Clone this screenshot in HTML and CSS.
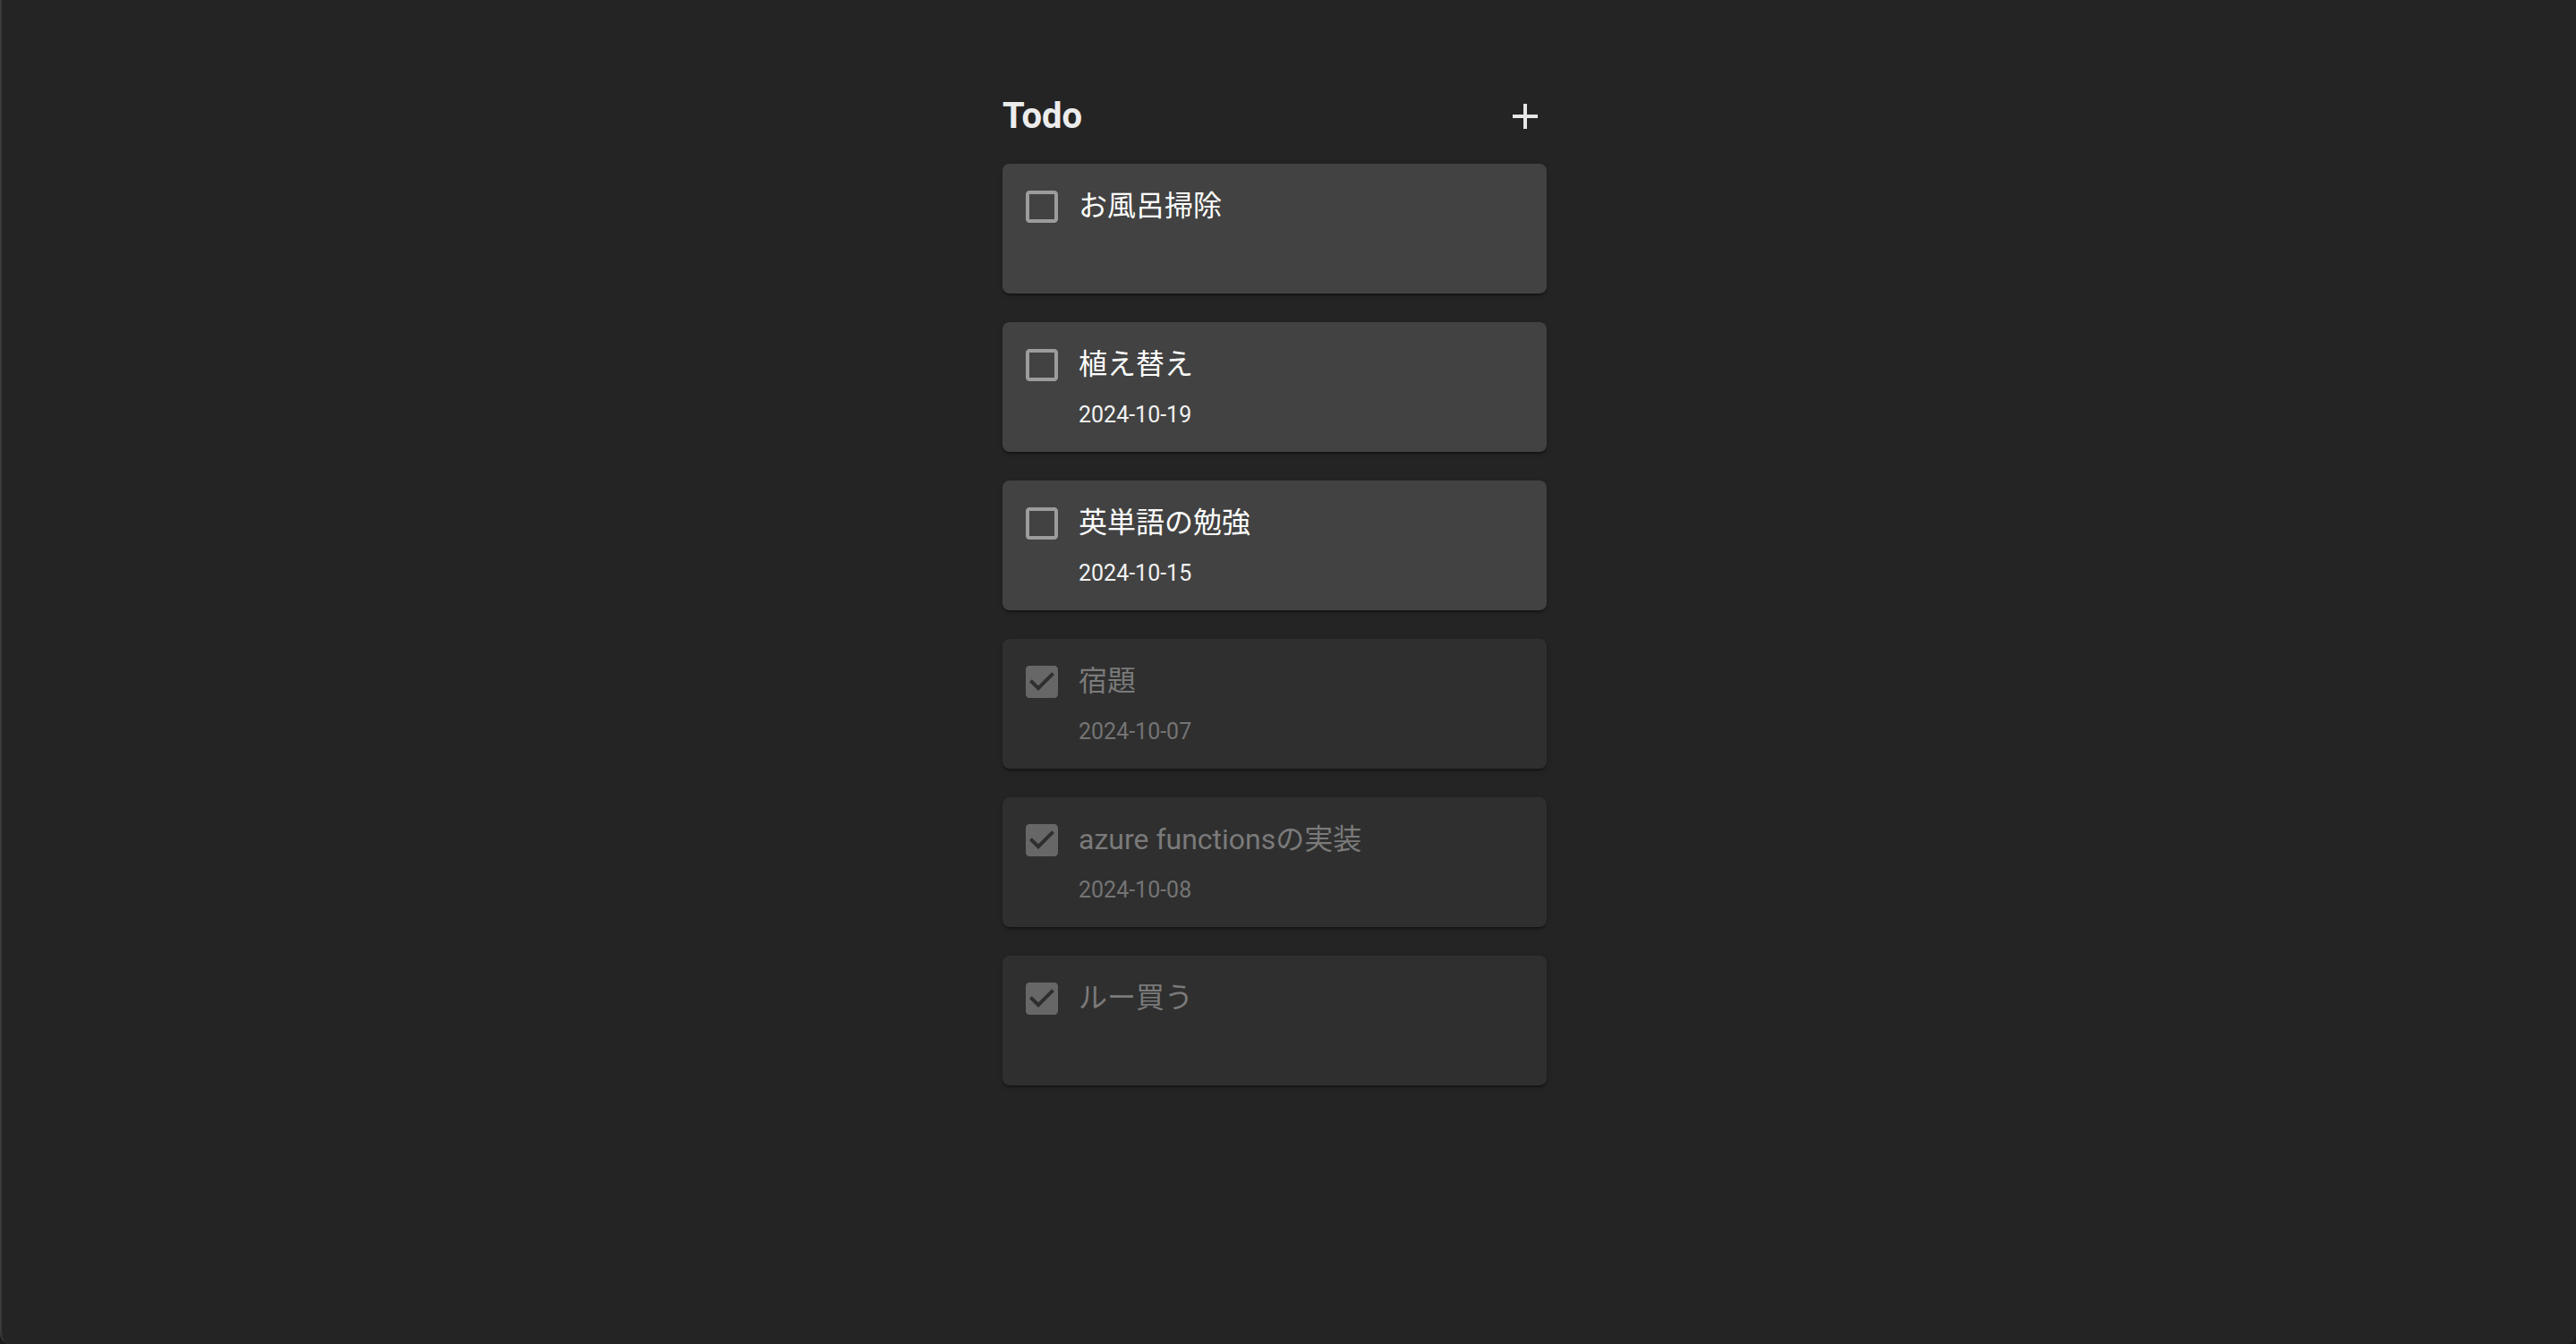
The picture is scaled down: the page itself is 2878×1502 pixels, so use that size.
FILE: index.html
```html
<!DOCTYPE html>
<html lang="ja">
<head>
<meta charset="utf-8">
<title>Todo</title>
<link rel="stylesheet" href="styles.css">
</head>
<body>
<div class="frame">
  <main class="todo">
    <header class="todo-header">
      <h1 class="todo-title">Todo</h1>
      <button class="add-btn" aria-label="追加">
        <svg viewBox="0 0 24 24" width="48" height="48"><path d="M19 13h-6v6h-2v-6H5v-2h6V5h2v6h6v2z"/></svg>
      </button>
    </header>
    <ul class="todo-list">
      <li class="card">
        <svg class="box" viewBox="0 0 24 24" width="48" height="48"><path d="M19 5v14H5V5h14m0-2H5c-1.1 0-2 .9-2 2v14c0 1.1.9 2 2 2h14c1.1 0 2-.9 2-2V5c0-1.1-.9-2-2-2z"/></svg>
        <div class="body"><div class="title">お風呂掃除</div><div class="date"></div></div>
      </li>
      <li class="card">
        <svg class="box" viewBox="0 0 24 24" width="48" height="48"><path d="M19 5v14H5V5h14m0-2H5c-1.1 0-2 .9-2 2v14c0 1.1.9 2 2 2h14c1.1 0 2-.9 2-2V5c0-1.1-.9-2-2-2z"/></svg>
        <div class="body"><div class="title">植え替え</div><div class="date">2024-10-19</div></div>
      </li>
      <li class="card">
        <svg class="box" viewBox="0 0 24 24" width="48" height="48"><path d="M19 5v14H5V5h14m0-2H5c-1.1 0-2 .9-2 2v14c0 1.1.9 2 2 2h14c1.1 0 2-.9 2-2V5c0-1.1-.9-2-2-2z"/></svg>
        <div class="body"><div class="title">英単語の勉強</div><div class="date">2024-10-15</div></div>
      </li>
      <li class="card done">
        <svg class="box" viewBox="0 0 24 24" width="48" height="48"><path d="M19 3H5c-1.11 0-2 .9-2 2v14c0 1.1.89 2 2 2h14c1.11 0 2-.9 2-2V5c0-1.1-.89-2-2-2zm-9 14l-5-5 1.41-1.41L10 14.17l7.59-7.59L19 8l-9 9z"/></svg>
        <div class="body"><div class="title">宿題</div><div class="date">2024-10-07</div></div>
      </li>
      <li class="card done">
        <svg class="box" viewBox="0 0 24 24" width="48" height="48"><path d="M19 3H5c-1.11 0-2 .9-2 2v14c0 1.1.89 2 2 2h14c1.11 0 2-.9 2-2V5c0-1.1-.89-2-2-2zm-9 14l-5-5 1.41-1.41L10 14.17l7.59-7.59L19 8l-9 9z"/></svg>
        <div class="body"><div class="title">azure functionsの実装</div><div class="date">2024-10-08</div></div>
      </li>
      <li class="card done">
        <svg class="box" viewBox="0 0 24 24" width="48" height="48"><path d="M19 3H5c-1.11 0-2 .9-2 2v14c0 1.1.89 2 2 2h14c1.11 0 2-.9 2-2V5c0-1.1-.89-2-2-2zm-9 14l-5-5 1.41-1.41L10 14.17l7.59-7.59L19 8l-9 9z"/></svg>
        <div class="body"><div class="title">ルー買う</div><div class="date"></div></div>
      </li>
    </ul>
  </main>
</div>
</body>
</html>
```
FILE: styles.css
```css
html {
  background: #1c1c1c;
}
body {
  margin: 0;
  font-family: "Roboto", "Noto Sans CJK JP", sans-serif;
  color: #fff;
}
.frame {
  box-sizing: border-box;
  height: 1502px;
  background: #242424;
  border-left: 2px solid #3a3a3a;
  border-radius: 0 0 12px 12px;
  display: flex;
  justify-content: center;
  padding-right: 32px;
}
.todo {
  width: 608px;
  padding-top: 98px;
}
.todo-header {
  display: flex;
  align-items: center;
  justify-content: space-between;
  height: 64px;
}
.todo-title {
  margin: 0;
  font-size: 40px;
  font-weight: 700;
  line-height: 64px;
  color: #ececec;
}
.add-btn {
  border: 0;
  padding: 0;
  background: none;
  width: 48px;
  height: 48px;
  display: flex;
}
.add-btn svg {
  fill: #e6e6e6;
}
.todo-list {
  list-style: none;
  margin: 21px 0 0;
  padding: 0;
  display: flex;
  flex-direction: column;
  gap: 32px;
}
.card {
  box-sizing: border-box;
  height: 145px;
  background: #424242;
  border-radius: 8px;
  box-shadow: 0 4px 2px -2px rgba(0,0,0,.2), 0 2px 2px 0 rgba(0,0,0,.14), 0 2px 6px 0 rgba(0,0,0,.12);
  display: flex;
  align-items: flex-start;
  padding: 23px 24px 24px 20px;
  gap: 17px;
}
.box {
  flex: none;
  margin-top: 1px;
  fill: #9c9c9c;
}
.title {
  font-size: 32px;
  line-height: 48px;
  color: #fff;
}
.date {
  margin-top: 16px;
  font-size: 25px;
  line-height: 34px;
  min-height: 34px;
  color: #f2f2f2;
}
.card.done {
  background: #2f2f2f;
}
.card.done .box {
  fill: #676767;
  fill-rule: evenodd;
}
.card.done .title {
  color: #7a7a7a;
}
.card.done .date {
  color: #747474;
}
```
